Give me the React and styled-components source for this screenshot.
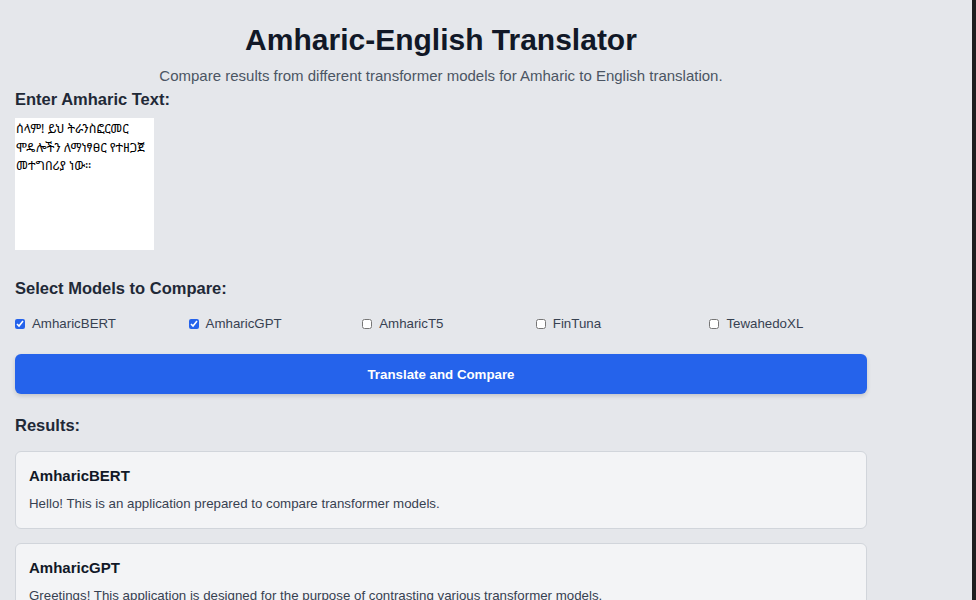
import styled, { createGlobalStyle } from 'styled-components';

const GlobalStyle = createGlobalStyle`
  html, body {
    margin: 0;
    padding: 0;
    background: #e5e7eb;
    font-family: "Liberation Sans", Arial, "Noto Sans", sans-serif;
    color: #1f2937;
  }
`;

// Layout
const Frame = styled.div`
  display: flex;
  min-height: 600px;
`;

const Page = styled.div`
  flex: 1;
  padding: 0 15px;
`;

const Edge = styled.div`
  width: 4px;
  background: #1e1e1e;
`;

const Container = styled.div`
  width: 852px;
  padding-top: 22px;
`;

const Title = styled.h1`
  margin: 0;
  text-align: center;
  font-size: 30px;
  font-weight: 700;
  color: #111827;
  line-height: 36px;
`;

const Subtitle = styled.p`
  margin: 9px 0 0;
  text-align: center;
  font-size: 15px;
  line-height: 18px;
  color: #4b5563;
`;

const Label = styled.h2`
  margin: ${(p) => p.$top || 0}px 0 0;
  font-size: 16.5px;
  font-weight: 700;
  color: #1f2937;
  line-height: 20px;
`;

const TextArea = styled.textarea`
  display: block;
  margin-top: 9px;
  width: 139px;
  height: 132px;
  box-sizing: border-box;
  border: none;
  background: #ffffff;
  padding: 2px 1px;
  font-family: "Noto Sans Ethiopic", "Abyssinica SIL", "DejaVu Sans", sans-serif;
  font-size: 12.5px;
  line-height: 18.5px;
  color: #000;
  resize: none;
`;

const ModelGrid = styled.div`
  display: grid;
  grid-template-columns: repeat(5, 1fr);
  gap: 16px;
  margin-top: 18px;
`;

const ModelOption = styled.label`
  display: flex;
  align-items: center;
  gap: 7px;
  font-size: 13.3px;
  color: #374151;
`;

const Checkbox = styled.input.attrs({ type: 'checkbox' })`
  margin: 0;
  width: 10px;
  height: 10px;
  accent-color: #2563eb;
`;

const Button = styled.button`
  display: block;
  width: 100%;
  height: 40px;
  margin-top: 23px;
  border: none;
  border-radius: 6px;
  background: #2563eb;
  color: #ffffff;
  font-family: inherit;
  font-size: 13.3px;
  font-weight: 700;
  box-shadow: 0 2px 4px rgba(0, 0, 0, 0.15);
`;

const ResultList = styled.div`
  display: flex;
  flex-direction: column;
  gap: 14px;
  margin-top: 16px;
`;

const Card = styled.div`
  background: #f3f4f6;
  border: 1px solid #d1d5db;
  border-radius: 6px;
  padding: 15px 13px 15px;
`;

const CardTitle = styled.h3`
  margin: 0;
  font-size: 15px;
  font-weight: 700;
  color: #111827;
  line-height: 18px;
`;

const CardText = styled.p`
  margin: 10px 0 0;
  font-size: 13.3px;
  color: #374151;
  line-height: 18px;
`;

const models = [
  { name: 'AmharicBERT', checked: true },
  { name: 'AmharicGPT', checked: true },
  { name: 'AmharicT5', checked: false },
  { name: 'FinTuna', checked: false },
  { name: 'TewahedoXL', checked: false },
];

const results = [
  {
    model: 'AmharicBERT',
    text: 'Hello! This is an application prepared to compare transformer models.',
  },
  {
    model: 'AmharicGPT',
    text: 'Greetings! This application is designed for the purpose of contrasting various transformer models.',
  },
];

const App = () => {
  return (
    <Frame>
      <GlobalStyle />
      <Page>
        <Container>
          <Title>Amharic-English Translator</Title>
          <Subtitle>
            Compare results from different transformer models for Amharic to English translation.
          </Subtitle>
          <Label $top={4}>Enter Amharic Text:</Label>
          <TextArea
            readOnly
            defaultValue="ሰላም! ይህ ትራንስፎርመር ሞዴሎችን ለማነፃፀር የተዘጋጀ መተግበሪያ ነው።"
          />
          <Label $top={28}>Select Models to Compare:</Label>
          <ModelGrid>
            {models.map((m) => (
              <ModelOption key={m.name}>
                <Checkbox defaultChecked={m.checked} />
                {m.name}
              </ModelOption>
            ))}
          </ModelGrid>
          <Button>Translate and Compare</Button>
          <Label $top={21}>Results:</Label>
          <ResultList>
            {results.map((r) => (
              <Card key={r.model}>
                <CardTitle>{r.model}</CardTitle>
                <CardText>{r.text}</CardText>
              </Card>
            ))}
          </ResultList>
        </Container>
      </Page>
      <Edge />
    </Frame>
  );
};

export default App;
